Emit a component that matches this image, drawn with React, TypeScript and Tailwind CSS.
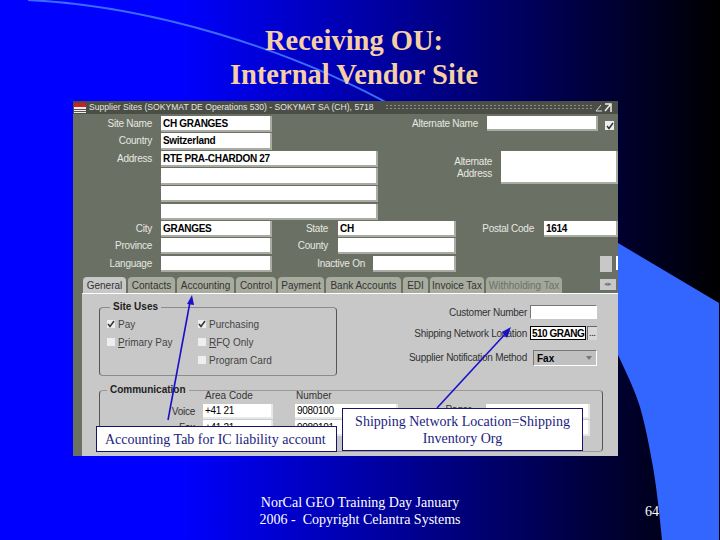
import type { ReactNode } from "react";

const sans = "font-['Liberation_Sans',Arial,sans-serif]";
const serif = "font-['Liberation_Serif','Times_New_Roman',serif]";

const TABS = [
  { name: "General", w: "w-[43px]", active: true },
  { name: "Contacts", w: "w-[47px]" },
  { name: "Accounting", w: "w-[57px]" },
  { name: "Control", w: "w-[40px]" },
  { name: "Payment", w: "w-[46px]" },
  { name: "Bank Accounts", w: "w-[75px]" },
  { name: "EDI", w: "w-[25px]" },
  { name: "Invoice Tax", w: "w-[54px]" },
  { name: "Withholding Tax", w: "w-[76px]", dim: true },
];

function Label({ className = "", children }: { className?: string; children: ReactNode }) {
  return (
    <span className={`shrink-0 text-right text-[10px] leading-[16px] tracking-[-0.25px] whitespace-nowrap ${className}`}>
      {children}
    </span>
  );
}

// white text field with the raised grey edge of the old Oracle forms
function Field({ className = "", children }: { className?: string; children?: ReactNode }) {
  return (
    <div
      className={`flex shrink-0 items-center overflow-hidden border-r-2 border-b-2 border-[#a9aca3] bg-white pl-[2px] text-[10px] tracking-[-0.3px] whitespace-nowrap text-black ${className}`}
    >
      {children}
    </div>
  );
}

function Check({ checked, className = "" }: { checked?: boolean; className?: string }) {
  return (
    <span className={`flex h-[8px] w-[8px] shrink-0 items-center justify-center bg-[#eeeeee] ${className}`}>
      {checked && (
        <svg viewBox="0 0 8 8" className="h-[8px] w-[8px]">
          <path d="M1 4l2 2.5L7 1" fill="none" stroke="#333" strokeWidth="1.5" />
        </svg>
      )}
    </span>
  );
}

function Option({ checked, children }: { checked?: boolean; children: ReactNode }) {
  return (
    <div className="flex h-[12px] items-center gap-[3px] text-[10px] whitespace-nowrap text-[#444]">
      <Check checked={checked} />
      <span>{children}</span>
    </div>
  );
}

function TitleBar() {
  return (
    <div className="flex h-[13px] items-center bg-[#4b4e47] pl-[1px] text-[8.6px] text-[#e4e6e0]">
      <svg viewBox="0 0 12 10" className="h-[10px] w-[12px] shrink-0">
        <rect width="12" height="10" fill="#eee" />
        <rect width="12" height="4" fill="#c22" />
        <rect y="6" width="12" height="1" fill="#555" />
        <rect y="8" width="12" height="1" fill="#555" />
      </svg>
      <span className="ml-[3px] w-[296px] shrink-0 whitespace-nowrap">
        Supplier Sites (SOKYMAT DE Operations 530) - SOKYMAT SA (CH), 5718
      </span>
      <div className="h-[7px] w-[207px] bg-[radial-gradient(#8d8f86_1px,transparent_1px)] bg-[length:4px_3px]" />
      <svg viewBox="0 0 18 10" className="ml-[3px] h-[10px] w-[18px] shrink-0">
        <path d="M1 8h6M1 8l5-6" fill="none" stroke="#ddd" strokeWidth="1" />
        <path d="M10 1h6v8M10 8l5-6" fill="none" stroke="#eee" strokeWidth="1.5" />
      </svg>
    </div>
  );
}

function HeaderForm() {
  return (
    <div className="bg-[#6b7064] pt-[2px] text-[#e6e8e2]">
      <div className="flex h-[105px]">
        <div className="flex w-[305px] shrink-0 flex-col">
          {[
            { label: "Site Name", value: "CH GRANGES", cls: "h-[16px] w-[111px] bg-[#fbf6a8] font-semibold", row: "h-[17px]" },
            { label: "Country", value: "Switzerland", cls: "h-[17px] w-[111px] font-semibold", row: "h-[18px]" },
            { label: "Address", value: "RTE PRA-CHARDON 27", cls: "h-[16px] w-[217px] font-semibold", row: "h-[17px]" },
            { label: "", value: "", cls: "h-[17px] w-[217px]", row: "h-[18px]" },
            { label: "", value: "", cls: "h-[16px] w-[217px]", row: "h-[18px]" },
            { label: "", value: "", cls: "h-[16px] w-[217px]", row: "h-[17px]" },
          ].map((r, i) => (
            <div key={i} className={`flex items-start ${r.row}`}>
              <Label className="w-[79px]">{r.label}</Label>
              <Field className={`ml-[9px] ${r.cls}`}>{r.value}</Field>
            </div>
          ))}
        </div>
        <div className="flex flex-col">
          <div className="flex h-[35px] items-start">
            <Label className="w-[100px]">Alternate Name</Label>
            <Field className="ml-[9px] h-[15px] w-[111px]" />
            <Check checked className="mt-[5px] ml-[7px] h-[9px] w-[9px]" />
          </div>
          <div className="flex items-start">
            <Label className="w-[114px] pt-[5px] leading-[12px]!">
              Alternate
              <br />
              Address
            </Label>
            <Field className="ml-[9px] h-[33px] w-[117px] border-r-0" />
          </div>
        </div>
      </div>
      <div className="flex h-[17px] items-start">
        <Label className="w-[79px]">City</Label>
        <Field className="ml-[9px] h-[16px] w-[111px] font-semibold">GRANGES</Field>
        <Label className="w-[56px]">State</Label>
        <Field className="ml-[10px] h-[16px] w-[118px] font-semibold">CH</Field>
        <Label className="w-[78px]">Postal Code</Label>
        <Field className="ml-[10px] h-[16px] w-[74px] border-r-0 font-semibold">1614</Field>
      </div>
      <div className="flex h-[18px] items-start">
        <Label className="w-[79px]">Province</Label>
        <Field className="ml-[9px] h-[16px] w-[111px]" />
        <Label className="w-[56px]">County</Label>
        <Field className="ml-[10px] h-[16px] w-[118px]" />
      </div>
      <div className="flex h-[21px] items-start">
        <Label className="w-[79px]">Language</Label>
        <Field className="ml-[9px] h-[16px] w-[111px]" />
        <Label className="w-[93px]">Inactive On</Label>
        <Field className="ml-[8px] h-[16px] w-[83px]" />
        <div className="ml-[144px] h-[16px] w-[12px] bg-[#c8c8c8]" />
        <div className="ml-[4px] h-[14px] w-[2px] bg-white" />
      </div>
    </div>
  );
}

function TabStrip() {
  return (
    <div className="flex h-[16px] items-end gap-[2px] bg-[#6b7064] pl-[10px]">
      {TABS.map((t) => (
        <div
          key={t.name}
          className={`flex h-[16px] shrink-0 items-center justify-center rounded-t-[4px] text-[10px] whitespace-nowrap ${t.w} ${
            t.active ? "bg-[#c8c8c8] text-[#333]" : t.dim ? "bg-[#a3a79b] text-[#6d7067]" : "bg-[#a8ac9f] text-[#333]"
          }`}
        >
          {t.name}
        </div>
      ))}
      <div className="mb-[3px] ml-[36px] flex h-[11px] w-[16px] items-center justify-center bg-[#c8c8c8] text-[7px] text-[#777]">
        ◂▸
      </div>
    </div>
  );
}

function SiteUses() {
  return (
    <fieldset className="mt-[7px] ml-[17px] h-[75px] w-[238px] shrink-0 rounded-[4px] border-x border-y border-x-[#555] border-y-[#8c8c8c] pl-[7px]">
      <legend className="ml-[3px] px-[3px] text-[10px] leading-[12px] font-bold text-[#222]">Site Uses</legend>
      <div className="flex pt-[5px]">
        <div className="flex w-[91px] flex-col gap-[6px]">
          <Option checked>Pay</Option>
          <Option>
            <u>P</u>rimary Pay
          </Option>
        </div>
        <div className="flex flex-col gap-[6px]">
          <Option checked>Purchasing</Option>
          <Option>
            <u>R</u>FQ Only
          </Option>
          <Option>Program Card</Option>
        </div>
      </div>
    </fieldset>
  );
}

function ShippingFields() {
  return (
    <div className="mt-[11px] flex w-[260px] flex-col items-end text-[#333]">
      <div className="flex h-[21px] items-start">
        <Label className="mr-[3px]">Customer Number</Label>
        <div className="h-[14px] w-[67px] border border-[#777] border-r-white border-b-white bg-white" />
      </div>
      <div className="flex h-[24px] items-start">
        <Label className="mr-[3px]">Shipping Network Location</Label>
        <div className="flex h-[14px] w-[56px] items-center overflow-hidden border border-black bg-white pl-[1px] text-[10px] font-bold tracking-[-0.5px] whitespace-nowrap text-black">
          510 GRANG
        </div>
        <div className="ml-px flex h-[14px] w-[10px] items-center justify-center border-t border-l border-[#666] bg-[#d8d8d8] text-[8px] leading-none font-bold">
          ...
        </div>
      </div>
      <div className="flex items-center">
        <Label className="mr-[6px]">Supplier Notification Method</Label>
        <div className="flex h-[16px] w-[64px] items-center justify-between border border-[#777] border-r-white border-b-white bg-[#c0c0c0] pr-[4px] pl-[3px] text-[10px] font-bold text-black">
          Fax
          <span className="h-0 w-0 border-x-[3px] border-t-[4px] border-x-transparent border-t-[#777]" />
        </div>
      </div>
    </div>
  );
}

function Communication() {
  return (
    <fieldset className="mt-[8px] ml-[17px] h-[68px] w-[504px] rounded-[4px] border-x border-y border-x-[#555] border-y-[#9a9a9a]">
      <legend className="ml-[7px] px-[3px] text-[10px] leading-[12px] font-bold text-[#222]">Communication</legend>
      <div className="-mt-[6px] mb-[2px] flex text-[10px] leading-[12px] text-[#333]">
        <span className="ml-[105px] w-[91px]">Area Code</span>
        <span>Number</span>
      </div>
      <div className="flex h-[16px] items-start">
        <Label className="w-[95px] text-[#333]">Voice</Label>
        <Field className="ml-[8px] h-[15px] w-[70px] border-[#e8e8e8]">+41 21</Field>
        <Field className="ml-[22px] h-[15px] w-[103px] border-[#e8e8e8]">9080100</Field>
        <Label className="-mt-[2px] w-[73px] text-[#333]">Pager</Label>
        <Field className="ml-[15px] h-[15px] w-[104px] border-[#e8e8e8]" />
      </div>
      <div className="flex items-start">
        <Label className="w-[95px] text-[#333]">Fax</Label>
        <Field className="ml-[8px] h-[16px] w-[70px] border-[#e8e8e8]">+41 21</Field>
        <Field className="ml-[22px] h-[16px] w-[103px] border-[#e8e8e8]">9080101</Field>
        <Field className="ml-[88px] h-[16px] w-[104px] border-[#e8e8e8]" />
      </div>
    </fieldset>
  );
}

export default function App() {
  return (
    <div className="relative h-[540px] w-[720px] overflow-hidden bg-[linear-gradient(to_right,#0000ff_0%,#0000ff_25%,#000000_100%)]">
      {/* slide swoosh behind everything */}
      <svg viewBox="0 0 720 540" className="absolute inset-0 h-[540px] w-[720px]">
        <path d="M28 0C150 6 290 48 400 110" fill="none" stroke="#3a6cff" strokeWidth="2" />
        <path
          d="M618 243L719 303V540H662C660 520 657 490 653 467C649 445 646 428 640 407C634 388 626 372 618 355Z"
          fill="#3366ff"
        />
      </svg>

      <div className="relative flex h-[540px] flex-col">
        <h1
          className={`h-[77px] w-[708px] pt-[24px] text-center text-[28.5px] leading-[34px] font-bold text-[#f6d0a4] ${serif}`}
        >
          Receiving OU:
          <br />
          Internal Vendor Site
        </h1>

        <div className={`mt-[24px] ml-[73px] h-[355px] w-[545px] ${sans}`}>
          <TitleBar />
          <HeaderForm />
          <TabStrip />
          <div className="flex h-[163px]">
            <div className="w-[9px] shrink-0 bg-[#6b7064]" />
            <div className="flex-1 border-t border-white bg-[#c8c8c8]">
              <div className="flex h-[82px]">
                <SiteUses />
                <ShippingFields />
              </div>
              <Communication />
            </div>
          </div>
        </div>

        <div className={`mt-[38px] flex text-white ${serif}`}>
          <div className="ml-[240px] w-[240px] text-center text-[14px] leading-[17px]">
            NorCal GEO Training Day January
            <br />
            2006 -{"\u00a0"} Copyright Celantra Systems
          </div>
          <div className="mt-[9px] ml-[165px] text-[14px] leading-[17px]">64</div>
        </div>
      </div>

      {/* pointer lines sit on top of the form, callouts on top of the lines */}
      <svg viewBox="0 0 720 540" className="absolute inset-0 h-[540px] w-[720px]">
        <path d="M168 420L190 302" stroke="#1a10c8" strokeWidth="1.6" fill="none" />
        <path d="M192 295L187 304L194 305Z" fill="#1a10c8" />
        <path d="M437 408L507 332" stroke="#1a10c8" strokeWidth="1.6" fill="none" />
        <path d="M511 327L502 332L507 338Z" fill="#1a10c8" />
      </svg>
      <div
        className={`absolute top-[426px] left-[96px] flex h-[26px] w-[241px] items-center border border-[#14146e] bg-white pl-[8px] text-[14px] whitespace-nowrap text-[#1c1c80] ${serif}`}
      >
        Accounting Tab for IC liability account
      </div>
      <div
        className={`absolute top-[408px] left-[342px] flex h-[43px] w-[241px] items-center justify-center border border-[#14146e] bg-white text-center text-[14px] leading-[17px] text-[#1c1c80] ${serif}`}
      >
        Shipping Network Location=Shipping
        <br />
        Inventory Org
      </div>
    </div>
  );
}
